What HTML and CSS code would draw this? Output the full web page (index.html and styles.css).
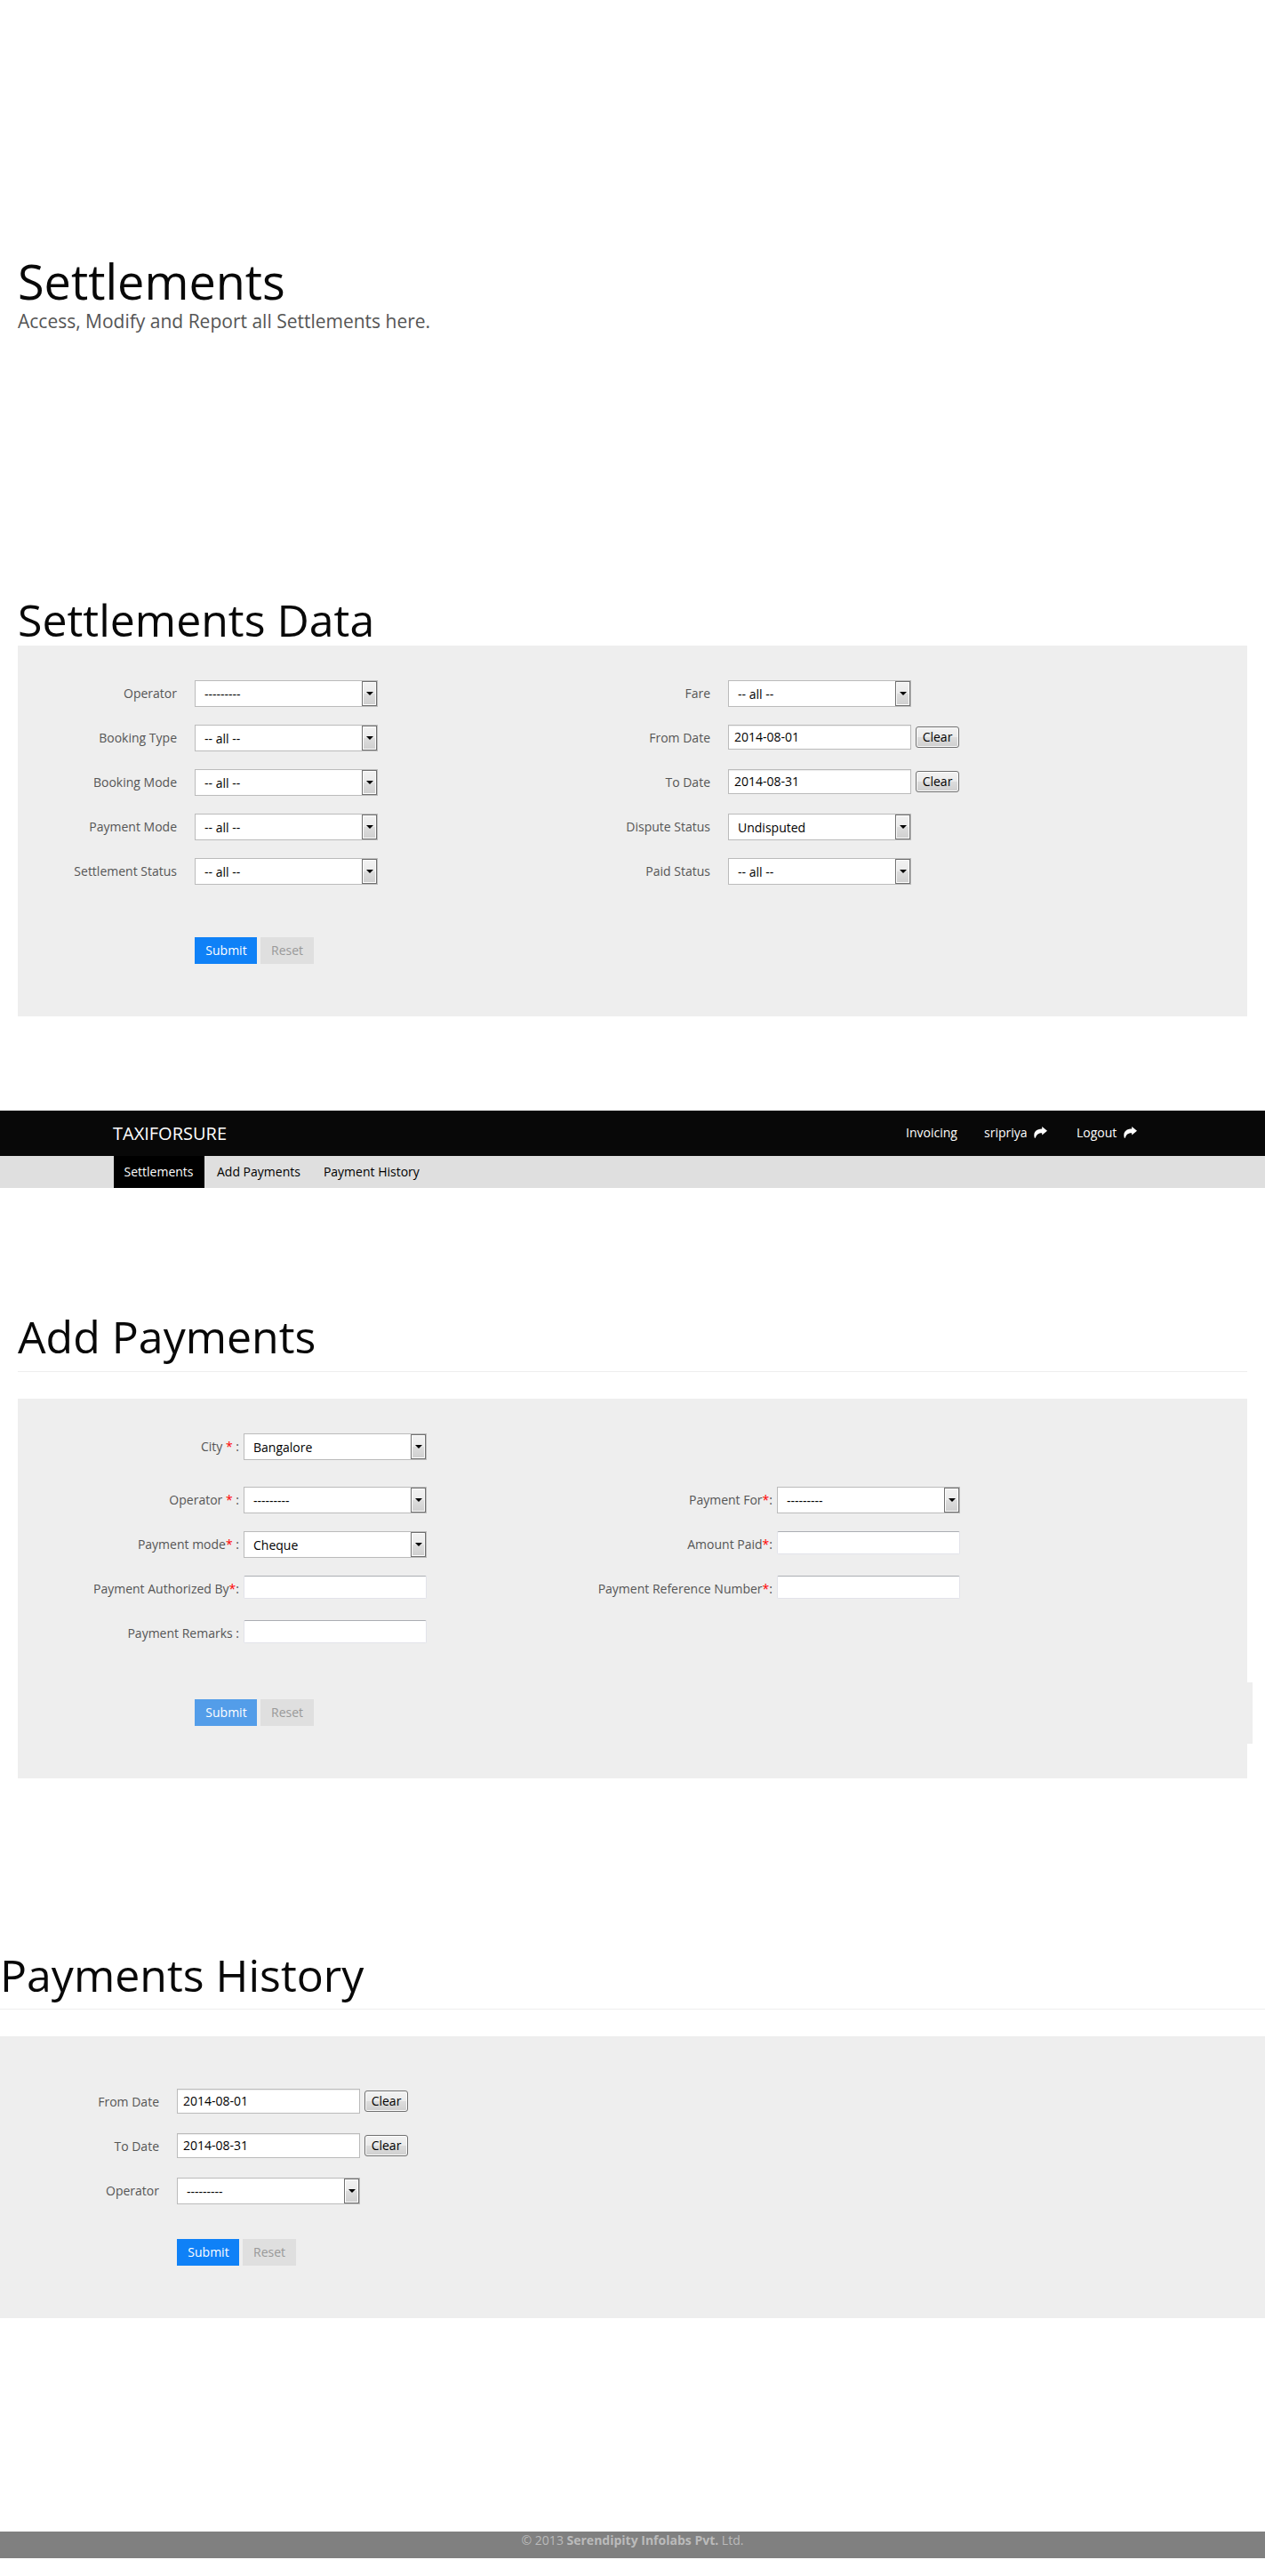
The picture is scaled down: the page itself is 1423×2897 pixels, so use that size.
FILE: index.html
```html
<!DOCTYPE html>
<html lang="en">
<head>
<meta charset="utf-8">
<title>Settlements</title>
<link rel="stylesheet" href="styles.css">
</head>
<body>
<header class="intro">
  <h1 class="intro-title">Settlements</h1>
  <p class="intro-text">Access, Modify and Report all Settlements here.</p>
</header>

<section class="section">
  <h2 class="heading heading-data">Settlements Data</h2>
  <form class="panel panel-data">
    <div class="columns">
      <div class="column">
        <div class="row"><label class="label">Operator</label><div class="select"><select><option>---------</option></select><span class="arrow"></span></div></div>
        <div class="row"><label class="label">Booking Type</label><div class="select"><select><option>-- all --</option></select><span class="arrow"></span></div></div>
        <div class="row"><label class="label">Booking Mode</label><div class="select"><select><option>-- all --</option></select><span class="arrow"></span></div></div>
        <div class="row"><label class="label">Payment Mode</label><div class="select"><select><option>-- all --</option></select><span class="arrow"></span></div></div>
        <div class="row"><label class="label">Settlement Status</label><div class="select"><select><option>-- all --</option></select><span class="arrow"></span></div></div>
      </div>
      <div class="column">
        <div class="row"><label class="label">Fare</label><div class="select"><select><option>-- all --</option></select><span class="arrow"></span></div></div>
        <div class="row"><label class="label">From Date</label><input class="date" type="text" value="2014-08-01"><button class="clear" type="button">Clear</button></div>
        <div class="row"><label class="label">To Date</label><input class="date" type="text" value="2014-08-31"><button class="clear" type="button">Clear</button></div>
        <div class="row"><label class="label">Dispute Status</label><div class="select"><select><option>Undisputed</option></select><span class="arrow"></span></div></div>
        <div class="row"><label class="label">Paid Status</label><div class="select"><select><option>-- all --</option></select><span class="arrow"></span></div></div>
      </div>
    </div>
    <div class="actions"><button class="btn btn-submit" type="button">Submit</button><button class="btn btn-reset" type="button">Reset</button></div>
  </form>
</section>

<nav class="topbar">
  <span class="brand">TAXIFORSURE</span>
  <a class="toplink link-invoicing">Invoicing</a>
  <a class="toplink link-user">sripriya <svg class="share" viewBox="0 0 15 13"><path d="M9.200 0 15 4.800 9.200 9.600V7.200C6 7 3 8.200 1.800 12.800H0.800C-1.200 6.500 2.500 2.500 9.200 2.400Z"/></svg></a>
  <a class="toplink link-logout">Logout <svg class="share" viewBox="0 0 15 13"><path d="M9.200 0 15 4.800 9.200 9.600V7.200C6 7 3 8.200 1.800 12.800H0.800C-1.200 6.500 2.500 2.500 9.200 2.400Z"/></svg></a>
</nav>
<nav class="subbar">
  <a class="tab tab-active">Settlements</a>
  <a class="tab">Add Payments</a>
  <a class="tab">Payment History</a>
</nav>

<section class="section">
  <h2 class="heading heading-add">Add Payments</h2>
  <form class="panel panel-add">
    <div class="row row-city"><label class="label">City <b class="req">*</b> :</label><div class="select"><select><option>Bangalore</option></select><span class="arrow"></span></div></div>
    <div class="columns">
      <div class="column">
        <div class="row"><label class="label">Operator <b class="req">*</b> :</label><div class="select"><select><option>---------</option></select><span class="arrow"></span></div></div>
        <div class="row"><label class="label">Payment mode<b class="req">*</b> :</label><div class="select"><select><option>Cheque</option></select><span class="arrow"></span></div></div>
        <div class="row"><label class="label">Payment Authorized By<b class="req">*</b>:</label><input class="text" type="text"></div>
        <div class="row"><label class="label">Payment Remarks :</label><input class="text" type="text"></div>
      </div>
      <div class="column">
        <div class="row"><label class="label">Payment For<b class="req">*</b>:</label><div class="select"><select><option>---------</option></select><span class="arrow"></span></div></div>
        <div class="row"><label class="label">Amount Paid<b class="req">*</b>:</label><input class="text" type="text"></div>
        <div class="row"><label class="label">Payment Reference Number<b class="req">*</b>:</label><input class="text" type="text"></div>
      </div>
    </div>
    <div class="actions"><button class="btn btn-submit btn-faded" type="button">Submit</button><button class="btn btn-reset" type="button">Reset</button></div>
  </form>
</section>

<section class="history">
  <h2 class="heading heading-history">Payments History</h2>
  <form class="panel panel-history">
    <div class="row"><label class="label">From Date</label><input class="date" type="text" value="2014-08-01"><button class="clear" type="button">Clear</button></div>
    <div class="row"><label class="label">To Date</label><input class="date" type="text" value="2014-08-31"><button class="clear" type="button">Clear</button></div>
    <div class="row"><label class="label">Operator</label><div class="select"><select><option>---------</option></select><span class="arrow"></span></div></div>
    <div class="actions"><button class="btn btn-submit" type="button">Submit</button><button class="btn btn-reset" type="button">Reset</button></div>
  </form>
</section>

<footer class="footer">© 2013 <b>Serendipity Infolabs Pvt.</b> Ltd.</footer>
</body>
</html>
```
FILE: styles.css
```css
* { box-sizing: border-box; }
body {
  margin: 0;
  height: 2897px;
  background: #fff;
  color: #555;
  font: 14px/30px "Open Sans", sans-serif;
}
select, input, button { font: inherit; margin: 0; }

.intro { padding: 286px 20px 0; height: 666px; }
.intro-title { margin: 0; font-size: 54px; font-weight: 400; line-height: 60px; color: #080808; }
.intro-text { margin: 0; font-size: 21px; line-height: 30px; }

.section { margin: 0 20px; }
.heading { margin: 0; padding-top: 1px; font-size: 50px; font-weight: 400; line-height: 60px; color: #080808; }
.heading-data { height: 60px; }
.heading-add { height: 71px; border-bottom: 1px solid #eee; margin: 136px 0 30px; }
.heading-history { height: 70px; border-bottom: 1px solid #eee; margin-bottom: 30px; }

.panel { background: #eee; }
.panel-data { height: 417px; padding-top: 39px; margin-bottom: 106px; }
.columns { display: grid; grid-template-columns: 600px 600px; }
.column { display: flex; flex-direction: column; }
.row { display: flex; align-items: flex-start; height: 50px; }
.label { flex: none; width: 179px; margin-right: 20px; text-align: right; white-space: nowrap; }
.req { color: #f00; font-weight: 400; }

.select {
  display: flex;
  width: 206px;
  height: 30px;
  border: 1px solid #bbb;
  background: #fff;
}
.select select {
  flex: 1;
  appearance: none;
  border: 0;
  padding: 2px 0 0 10px;
  background: transparent;
  color: #000;
  line-height: 26px;
}
.arrow {
  display: flex;
  align-items: center;
  justify-content: center;
  width: 17px;
  border: 1px solid #707070;
  box-shadow: inset 0 0 0 1px #fff;
  background: linear-gradient(#f2f2f2, #ebebeb 49%, #ddd 50%, #cfcfcf);
}
.arrow::before {
  content: "";
  border: 4px solid transparent;
  border-top-color: #000;
  border-bottom: 0;
}
.date {
  width: 206px;
  height: 28px;
  padding: 0 6px 1px;
  border: 1px solid #bbb;
  background: #fff;
  box-shadow: inset 0 1px 1px rgba(0, 0, 0, .075);
  color: #000;
  line-height: 20px;
}
.clear {
  width: 49px;
  height: 24px;
  margin: 2px 0 0 5px;
  padding: 0;
  border: 1px solid #707070;
  border-radius: 3px;
  box-shadow: inset 0 0 0 1px #fbfbfb;
  background: linear-gradient(#f2f2f2, #ebebeb 49%, #ddd 50%, #cfcfcf);
  color: #000;
  line-height: 20px;
}
.text {
  width: 206px;
  height: 26px;
  padding: 2px 4px;
  border: 1px solid #e2e3ea;
  border-top-color: #abadb3;
  border-radius: 2px;
  background: #fff;
}

.actions { display: flex; gap: 4px; margin: 39px 0 0 199px; }
.btn { height: 30px; padding: 0 0 0 1px; border: 0; line-height: 30px; }
.btn-submit { width: 70px; background: #0f81f7; color: #fff; }
.btn-faded { background: #539de9; }
.btn-reset { width: 60px; padding: 0; background: #dfdfdf; color: #999; }

.topbar { display: flex; height: 51px; padding-left: 127px; background: #080808; color: #fff; }
.brand { width: 892px; font-size: 20px; line-height: 51px; }
.toplink { line-height: 49px; white-space: nowrap; }
.link-invoicing { width: 88px; }
.link-user { width: 104px; }
.share { width: 15px; height: 13px; margin-left: 4px; fill: #fff; vertical-align: -1px; }
.subbar { display: flex; gap: 2px; height: 36px; padding-left: 128px; background: #dfdfdf; color: #000; line-height: 36px; }
.tab { padding: 0 12px; white-space: nowrap; }
.tab-active { width: 102px; padding: 0 11.500px; background: #000; color: #fff; }

.panel-add {
  position: relative;
  height: 427px;
  padding-top: 39px;
}
/* stub that sticks out past the panel's right edge beside the buttons */
.panel-add::after {
  content: "";
  position: absolute;
  top: 319px;
  right: -6px;
  width: 6px;
  height: 69px;
  background: #eee;
}
.panel-add .label { width: 249px; margin-right: 5px; }
.row-city { height: 60px; }

.history { margin-top: 190px; }
.panel-history { height: 317px; padding-top: 59px; }
.panel-history .actions { margin-top: 19px; }

.footer { height: 30px; margin-top: 240px; background: #808080; color: #bbb; text-align: center; line-height: 20px; }
```
